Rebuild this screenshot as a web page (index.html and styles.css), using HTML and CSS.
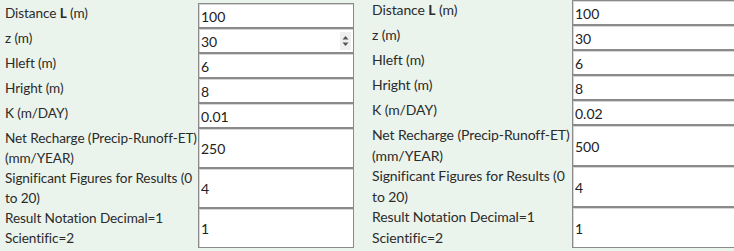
FILE: index.html
```html
<!DOCTYPE html>
<html lang="en">
  <head>
    <meta charset="UTF-8" />
    <meta name="viewport" content="width=device-width, initial-scale=1.0" />
    <title>Groundwater Flow Inputs</title>
    <link rel="stylesheet" href="styles.css">
  </head>
  <body>
    <div class="sheet">
      <!-- first scenario -->
      <div class="panel panel-a">
        <div class="lbl">Distance <b>L</b> (m)</div>
        <input class="fld" type="text" value="100">
        <div class="lbl">z (m)</div>
        <span class="spin-wrap">
          <input class="fld" type="text" value="30">
          <span class="spinner">
            <svg width="11" height="18" viewBox="0 0 11 18">
              <path d="M2.5 7.5 L5.5 4 L8.5 7.5 Z" fill="#555"/>
              <path d="M2.5 10.5 L5.5 14 L8.5 10.5 Z" fill="#555"/>
            </svg>
          </span>
        </span>
        <div class="lbl">Hleft (m)</div>
        <input class="fld" type="text" value="6">
        <div class="lbl">Hright (m)</div>
        <input class="fld" type="text" value="8">
        <div class="lbl">K (m/DAY)</div>
        <input class="fld" type="text" value="0.01">
        <div class="lbl">Net Recharge <span class="nw">(Precip-Runoff-ET)</span> (mm/YEAR)</div>
        <input class="fld" type="text" value="250">
        <div class="lbl">Significant Figures for Results (0 to 20)</div>
        <input class="fld" type="text" value="4">
        <div class="lbl">Result Notation Decimal=1 Scientific=2</div>
        <input class="fld" type="text" value="1">
      </div>

      <!-- second scenario -->
      <div class="panel panel-b">
        <div class="lbl">Distance <b>L</b> (m)</div>
        <input class="fld" type="text" value="100">
        <div class="lbl">z (m)</div>
        <input class="fld" type="text" value="30">
        <div class="lbl">Hleft (m)</div>
        <input class="fld" type="text" value="6">
        <div class="lbl">Hright (m)</div>
        <input class="fld" type="text" value="8">
        <div class="lbl">K (m/DAY)</div>
        <input class="fld" type="text" value="0.02">
        <div class="lbl">Net Recharge <span class="nw">(Precip-Runoff-ET)</span> (mm/YEAR)</div>
        <input class="fld" type="text" value="500">
        <div class="lbl">Significant Figures for Results (0 to 20)</div>
        <input class="fld" type="text" value="4">
        <div class="lbl">Result Notation Decimal=1 Scientific=2</div>
        <input class="fld" type="text" value="1">
      </div>
    </div>
  </body>
</html>
```

FILE: styles.css
```css
* {
  margin: 0;
  padding: 0;
  box-sizing: border-box;
}
body {
  background-color: #eaf4ec;
  color: #2b2b2b;
  font-family: Lato, "Open Sans", sans-serif;
  font-size: 13.6px;
  letter-spacing: -0.1px;
  overflow: hidden;
  width: 734px;
  height: 251px;
}
.sheet {
  display: flex;
  align-items: flex-start;
}
.panel {
  display: grid;
  align-items: stretch;
}
.panel-a {
  width: 364px;
  padding: 3px 10px 0 5px;
  grid-template-columns: 193px 156px;
}
.panel-b {
  flex: 1;
  overflow: hidden;
  padding: 0 0 0 8px;
  grid-template-columns: 200px 170px;
  font-size: 14px;
}
.lbl {
  line-height: 20px;
  min-height: 25px;
}
.panel-b .lbl {
  line-height: 20.5px;
}
.lbl b {
  font-weight: 700;
}
.nw {
  white-space: nowrap;
}
.fld {
  display: block;
  width: 100%;
  min-height: 25px;
  height: 100%;
  border: 1px solid #8a8a8a;
  box-shadow: inset 1px 1px 0 #d6d6d6;
  background: #fff;
  color: #222;
  font-family: Lato, "Open Sans", sans-serif;
  font-size: 14px;
  letter-spacing: 0;
  padding: 1px 2px 0 2px;
  outline: none;
}
.spin-wrap {
  position: relative;
  display: block;
}
.spinner {
  position: absolute;
  right: 3px;
  top: 4px;
  width: 11px;
  height: 18px;
  background: #efefef;
}
.spinner svg {
  display: block;
}
```
